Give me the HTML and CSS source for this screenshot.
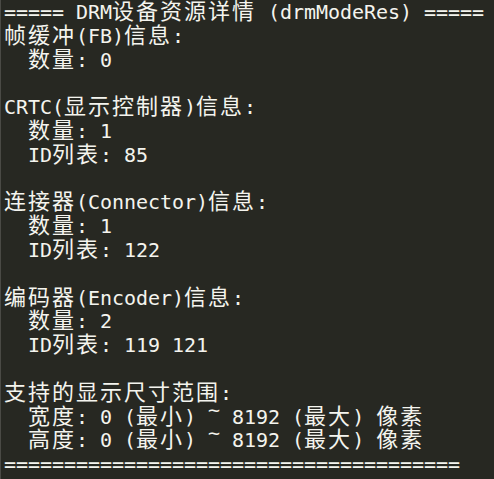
FILE: index.html
```html
<!DOCTYPE html>
<html lang="zh-CN">
<head>
<meta charset="utf-8">
<title>drmModeRes</title>
<link rel="stylesheet" href="styles.css">
</head>
<body>
<div class="term">
<div class="ln">===== DRM<span class="c">设备资源详情</span> (drmModeRes) =====</div>
<div class="ln"><span class="c">帧缓冲</span>(FB)<span class="c">信息</span>:</div>
<div class="ln">  <span class="c">数量</span>: 0</div>
<div class="ln"> </div>
<div class="ln">CRTC(<span class="c">显示控制器</span>)<span class="c">信息</span>:</div>
<div class="ln">  <span class="c">数量</span>: 1</div>
<div class="ln">  ID<span class="c">列表</span>: 85</div>
<div class="ln"> </div>
<div class="ln"><span class="c">连接器</span>(Connector)<span class="c">信息</span>:</div>
<div class="ln">  <span class="c">数量</span>: 1</div>
<div class="ln">  ID<span class="c">列表</span>: 122</div>
<div class="ln"> </div>
<div class="ln"><span class="c">编码器</span>(Encoder)<span class="c">信息</span>:</div>
<div class="ln">  <span class="c">数量</span>: 2</div>
<div class="ln">  ID<span class="c">列表</span>: 119 121</div>
<div class="ln"> </div>
<div class="ln"><span class="c">支持的显示尺寸范围</span>:</div>
<div class="ln">  <span class="c">宽度</span>: 0 (<span class="c">最小</span>) <span class="t">~</span> 8192 (<span class="c">最大</span>) <span class="c">像素</span></div>
<div class="ln">  <span class="c">高度</span>: 0 (<span class="c">最小</span>) <span class="t">~</span> 8192 (<span class="c">最大</span>) <span class="c">像素</span></div>
<div class="ln">======================================</div>
</div>
</body>
</html>
```

FILE: styles.css
```css
html, body {
  margin: 0;
  padding: 0;
  background: #272822;
  height: 100%;
}

.term {
  box-sizing: border-box;
  min-height: 100%;
  border-left: 1px solid #4a4a45;
  padding: 1px 0 0 3px;
  color: #f4f4ee;
  font-family: "DejaVu Sans Mono", monospace;
  font-size: 20px;
  letter-spacing: -0.04px;
}

.ln {
  height: 23.8px;
  line-height: 23.8px;
  white-space: pre;
}

.c {
  font-family: "Noto Sans CJK SC", sans-serif;
  font-size: 22px;
  letter-spacing: 2px;
  line-height: 0;
}

.t {
  vertical-align: 0.35em;
  line-height: 0;
}
```
